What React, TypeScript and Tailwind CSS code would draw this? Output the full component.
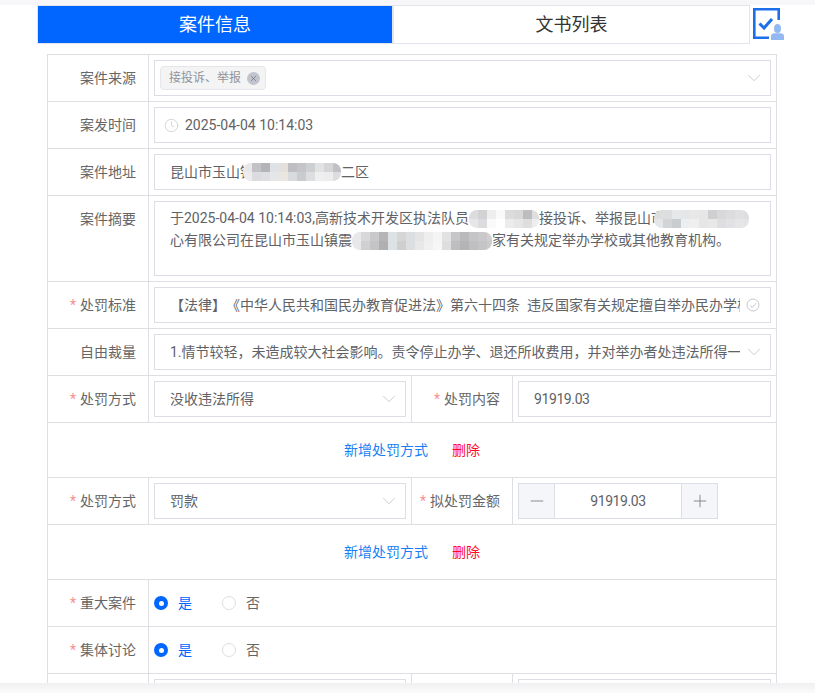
import React from 'react';
import { ChevronDown, Clock, Minus, Plus, X } from 'lucide-react';

const FONT = "font-['Roboto','Noto_Sans_CJK_SC',sans-serif]";

// pixelated privacy mask, as in the picture
const Mosaic: React.FC<{ rows: string[][]; className: string }> = ({ rows, className }) => (
    <span className={`inline-flex flex-col overflow-hidden rounded-[8px] align-middle ${className}`}>
        {rows.map((row, r) => (
            <span key={r} className="flex h-[9px]">
                {row.map((c, i) => (
                    <span key={i} className={`h-[9px] w-[9px] shrink-0 ${c}`} />
                ))}
            </span>
        ))}
    </span>
);

const Field: React.FC<{ className?: string; children?: React.ReactNode }> = ({ className = '', children }) => (
    <div className={`flex h-9 items-center overflow-hidden whitespace-nowrap border border-[#dcdee6] bg-white text-[14px] text-[#606266] ${className}`}>
        {children}
    </div>
);

const Label: React.FC<{ text?: string; required?: boolean; className?: string }> = ({ text, required, className = '' }) => (
    <div className={`flex h-full w-[101px] shrink-0 justify-end border-r border-[#dfdfe3] pr-3 text-[14px] text-[#666666] ${className || 'items-center'}`}>
        {required && <span className="mr-1 text-[#f78f8f]">*</span>}
        {text}
    </div>
);

const Row: React.FC<{ h?: string; children: React.ReactNode }> = ({ h = 'h-[47px]', children }) => (
    <div className={`flex shrink-0 items-center border-b border-[#dfdfe3] ${h}`}>{children}</div>
);

const Arrow = () => <ChevronDown size={22} strokeWidth={1} className="ml-auto mr-[5px] shrink-0 text-[#c5c8ce]" />;

const Actions = () => (
    <Row h="h-[55px]">
        <div className="flex w-full justify-center gap-6 text-[14px]">
            <span className="text-[#1a7ff5]">新增处罚方式</span>
            <span className="text-[#ff0a2c]">删除</span>
        </div>
    </Row>
);

const RadioPair = () => (
    <div className="flex h-full flex-1 items-center pl-[5px] text-[14px]">
        <span className="flex h-[14px] w-[14px] items-center justify-center rounded-full bg-[#0066ff]">
            <span className="h-[5px] w-[5px] rounded-full bg-white" />
        </span>
        <span className="ml-[10px] text-[#0066ff]">是</span>
        <span className="ml-[30px] h-[14px] w-[14px] rounded-full border border-[#dcdee6]" />
        <span className="ml-[10px] text-[#666666]">否</span>
    </div>
);

const HalfRow: React.FC<{ label?: string; label2?: string; left?: string; right?: React.ReactNode; required?: boolean }> = ({ label, label2, left, right, required }) => (
    <Row>
        <Label text={label} required={required} />
        <div className="flex h-full w-[263px] shrink-0 items-center border-r border-[#dfdfe3] pl-[5px]">
            <Field className="w-[252px] pl-[15px]">
                {left}
                {left && <Arrow />}
            </Field>
        </div>
        <Label text={label2} required={required} />
        <div className="flex h-full flex-1 items-center px-[5px]">{right}</div>
    </Row>
);

const CaseIcon = () => (
    <svg width="32" height="34" viewBox="0 0 32 34" className="mb-[2px] ml-[3px] shrink-0">
        <path d="M16 29.800H1.300V1.300H25.700V12" fill="none" stroke="#1b6fe8" strokeWidth="2.600" />
        <path d="M6.500 15.500l4.500 4.500 8-9" fill="none" stroke="#1b6fe8" strokeWidth="3" />
        <ellipse cx="24.500" cy="20.500" rx="3.500" ry="4.500" fill="#94b9f2" />
        <path d="M18 32v-3.500c0-2 1.500-3.200 3.500-3.200h6c2 0 3.500 1.200 3.500 3.200V32z" fill="#94b9f2" />
    </svg>
);

export default function App() {
    return (
        <div className={`flex h-[693px] w-[815px] flex-col overflow-hidden bg-white [text-spacing-trim:space-all] ${FONT}`}>
            <div className="h-[5px] shrink-0 bg-[#f7f7f9]" />
            <div className="min-h-0 flex-1 overflow-hidden">
                <div className="ml-[37px] flex h-[39px] items-end">
                    <div className="flex h-[39px] w-[356px] items-center justify-center border border-[#e3e5ec] bg-[#0066ff] text-[18px] text-white">案件信息</div>
                    <div className="flex h-[39px] w-[357px] items-center justify-center border border-[#e3e5ec] bg-white text-[18px] text-[#333333]">文书列表</div>
                    <CaseIcon />
                </div>
                <div className="ml-[47px] mt-[10px] flex w-[730px] flex-col border-x border-t border-[#dfdfe3]">
                    <Row>
                        <Label text="案件来源" />
                        <div className="flex-1 px-[5px]">
                            <Field className="pl-[5px]">
                                <span className="flex h-6 items-center rounded-[4px] border border-[#e6e6ea] bg-[#f4f4f5] pl-2 pr-[5px] text-[12px] text-[#909399]">
                                    接投诉、举报
                                    <span className="ml-[6px] flex h-[13px] w-[13px] items-center justify-center rounded-full bg-[#c0c4cc]">
                                        <X size={9} strokeWidth={1.5} className="text-[#606266]" />
                                    </span>
                                </span>
                                <Arrow />
                            </Field>
                        </div>
                    </Row>
                    <Row>
                        <Label text="案发时间" />
                        <div className="flex-1 px-[5px]">
                            <Field className="pl-[9px]">
                                <Clock size={15} strokeWidth={1.2} className="mr-[6px] text-[#c5c8ce]" />
                                2025-04-04 10:14:03
                            </Field>
                        </div>
                    </Row>
                    <Row>
                        <Label text="案件地址" />
                        <div className="flex-1 px-[5px]">
                            <Field className="pl-[15px]">
                                昆山市玉山镇
                                <Mosaic
                                    className="-ml-[11px] w-[98px]"
                                    rows={[
                                        ['bg-[#e8e8ea]', 'bg-[#c2c2c4]', 'bg-[#b4b4b7]', 'bg-[#dfe2e6]', 'bg-[#e6e0dc]', 'bg-[#bfbfc3]', 'bg-[#c5c5c9]', 'bg-[#cdd0d3]', 'bg-[#e2e2e2]', 'bg-[#d5d5d7]', 'bg-[#c0c1c5]'],
                                        ['bg-[#ececee]', 'bg-[#dcdcde]', 'bg-[#dddfe2]', 'bg-[#e4e6e8]', 'bg-[#ebe6e2]', 'bg-[#d8dade]', 'bg-[#c9cbcf]', 'bg-[#dcdee0]', 'bg-[#efefef]', 'bg-[#ededed]', 'bg-[#dcdde1]'],
                                    ]}
                                />
                                二区
                            </Field>
                        </div>
                    </Row>
                    <Row h="h-[86px]">
                        <Label text="案件摘要" className="items-start pt-[13px]" />
                        <div className="flex-1 px-[5px]">
                            <div className="h-[75px] overflow-hidden whitespace-nowrap border border-[#dcdee6] pl-[15px] pt-[5px] text-[14px] leading-[22px] text-[#606266]">
                                <div>
                                    于2025-04-04 10:14:03,高新技术开发区执法队员
                                    <Mosaic
                                        className="w-[70px]"
                                        rows={[
                                            ['bg-[#dcdcde]', 'bg-[#d2d2d4]', 'bg-[#eeeeee]', 'bg-[#fafafa]', 'bg-[#dcdcdc]', 'bg-[#d8d8d8]', 'bg-[#bdbdc0]', 'bg-[#dedede]'],
                                            ['bg-[#e6e6e8]', 'bg-[#dcdcde]', 'bg-[#fafafa]', 'bg-[#ffffff]', 'bg-[#ececec]', 'bg-[#e6e6e6]', 'bg-[#dedede]', 'bg-[#ededed]'],
                                        ]}
                                    />
                                    接投诉、举报昆山市
                                    <Mosaic
                                        className="-ml-[11px] w-[95px]"
                                        rows={[
                                            ['bg-[#dcdee0]', 'bg-[#dcdee0]', 'bg-[#e6e8ea]', 'bg-[#e4e6e8]', 'bg-[#e8e8e8]', 'bg-[#e6e6e6]', 'bg-[#cfcfd2]', 'bg-[#d6d8da]', 'bg-[#dcdcde]', 'bg-[#e0e0e2]', 'bg-[#dedee0]'],
                                            ['bg-[#e4e6e8]', 'bg-[#d2d4d6]', 'bg-[#c9cdd0]', 'bg-[#eceef0]', 'bg-[#efefef]', 'bg-[#e6e6e6]', 'bg-[#e8e8e8]', 'bg-[#dedee0]', 'bg-[#e2e2e4]', 'bg-[#e6e6e8]', 'bg-[#e4e4e6]'],
                                        ]}
                                    />
                                </div>
                                <div>
                                    心有限公司在昆山市玉山镇震
                                    <Mosaic
                                        className="w-[140px]"
                                        rows={[
                                            ['bg-[#e8e8ea]', 'bg-[#d8d8da]', 'bg-[#c9c9cb]', 'bg-[#b5b5b8]', 'bg-[#dde2e6]', 'bg-[#d6d6d6]', 'bg-[#dcdfe2]', 'bg-[#e4e4e4]', 'bg-[#eeeeee]', 'bg-[#f4f4f4]', 'bg-[#e0e2e4]', 'bg-[#c6c6c9]', 'bg-[#b9b9bc]', 'bg-[#c5c5c8]', 'bg-[#c9c9cb]', 'bg-[#d0d0d2]'],
                                            ['bg-[#e8e8ea]', 'bg-[#d0d0d2]', 'bg-[#c4c4c6]', 'bg-[#b0b0b3]', 'bg-[#dde2e6]', 'bg-[#cfcfcf]', 'bg-[#dcdfe2]', 'bg-[#e8e8e8]', 'bg-[#f0f0f0]', 'bg-[#f6f6f6]', 'bg-[#dcdee0]', 'bg-[#bebec1]', 'bg-[#b4b4b7]', 'bg-[#bfbfc2]', 'bg-[#c4c4c6]', 'bg-[#cbcbcd]'],
                                        ]}
                                    />
                                    家有关规定举办学校或其他教育机构。
                                </div>
                            </div>
                        </div>
                    </Row>
                    <Row>
                        <Label text="处罚标准" required />
                        <div className="flex-1 px-[5px]">
                            <Field className="pl-[15px]">
                                <span className="w-[570px] shrink-0 overflow-hidden">【法律】《中华人民共和国民办教育促进法》第六十四条&nbsp;&nbsp;违反国家有关规定擅自举办民办学校</span>
                                <svg width="14" height="14" viewBox="0 0 14 14" fill="none" stroke="#c5c8ce" strokeWidth="1" className="ml-auto mr-[10px] shrink-0">
                                    <circle cx="7" cy="7" r="6" />
                                    <path d="M4 7.200l2.200 2.200 4-4.200" />
                                </svg>
                            </Field>
                        </div>
                    </Row>
                    <Row>
                        <Label text="自由裁量" />
                        <div className="flex-1 px-[5px]">
                            <Field className="pl-[15px]">
                                <span className="w-[570px] shrink-0 overflow-hidden">1.情节较轻，未造成较大社会影响。责令停止办学、退还所收费用，并对举办者处违法所得一倍以上</span>
                                <Arrow />
                            </Field>
                        </div>
                    </Row>
                    <HalfRow
                        required
                        label="处罚方式"
                        label2="处罚内容"
                        left="没收违法所得"
                        right={<Field className="w-full pl-[15px] tracking-[-0.4px]">91919.03</Field>}
                    />
                    <Actions />
                    <HalfRow
                        required
                        label="处罚方式"
                        label2="拟处罚金额"
                        left="罚款"
                        right={
                            <Field className="w-[200px]">
                                <span className="flex h-full w-9 shrink-0 items-center justify-center border-r border-[#dcdee6] bg-[#f5f6fa]">
                                    <Minus size={20} strokeWidth={1} className="text-[#777777]" />
                                </span>
                                <span className="flex-1 text-center tracking-[-0.4px]">91919.03</span>
                                <span className="flex h-full w-9 shrink-0 items-center justify-center border-l border-[#dcdee6] bg-[#f5f6fa]">
                                    <Plus size={20} strokeWidth={1} className="text-[#777777]" />
                                </span>
                            </Field>
                        }
                    />
                    <Actions />
                    <Row>
                        <Label text="重大案件" required />
                        <RadioPair />
                    </Row>
                    <Row>
                        <Label text="集体讨论" required />
                        <RadioPair />
                    </Row>
                    <HalfRow right={<Field className="w-full" />} />
                </div>
            </div>
            <div className="h-[10px] shrink-0 bg-gradient-to-b from-[#f0f0f2] to-[#fbfbfb]" />
        </div>
    );
}
